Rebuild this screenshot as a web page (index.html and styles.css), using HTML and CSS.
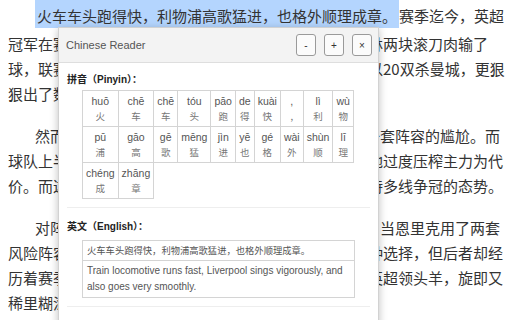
FILE: index.html
```html
<!DOCTYPE html>
<html lang="zh-CN">
<head>
  <meta charset="UTF-8" />
  <meta name="viewport" content="width=device-width, initial-scale=1.0"/>
  <title>Chinese Reader</title>
  <link rel="stylesheet" href="styles.css">
</head>
<body>
  <article class="article">
    <p class="para"><span class="mark">火车车头跑得快，利物浦高歌猛进，也格外顺理成章。</span>赛季迄今，英超冠军在赛季初一度领跑，但先后在对阵热刺与诺丁汉森林两块滚刀肉输了球，联赛积分榜上一度被甩开八分之多。然而他们随后以20双杀曼城，更狠狠出了数月以来积压的一口恶气。</p>
    <p class="para">然而密集的赛程也让利物浦再度陷入只能够依赖同一套阵容的尴尬。而球队上半程的一路领跑，很大程度上是以连续多轮不断地过度压榨主力为代价。而这样的消耗也让他们在新年到来前早早失去了保持多线争冠的态势。</p>
    <p class="para">对阵巴黎圣日耳曼的两回合较量中，局面其实相似：当恩里克用了两套风险阵容应对联赛与欧冠的双线作战，而斯洛特只有一种选择，但后者却经历着赛季最密集的赛程考验，一度还在积分榜上成为了英超领头羊，旋即又稀里糊涂地接连丢分，把榜首拱手让人。</p>
  </article>

  <!-- Reader popup -->
  <div class="reader">
    <div class="reader-head">
      <span class="reader-title">Chinese Reader</span>
      <div class="reader-actions">
        <button class="btn">-</button>
        <button class="btn">+</button>
        <button class="btn">×</button>
      </div>
    </div>
    <div class="reader-body">
      <div class="section">
        <div class="section-title">拼音（Pinyin）：</div>
        <table class="pinyin">
          <tr>
            <td><div class="py">huō</div><div class="hz">火</div></td>
            <td><div class="py">chē</div><div class="hz">车</div></td>
            <td><div class="py">chē</div><div class="hz">车</div></td>
            <td><div class="py">tóu</div><div class="hz">头</div></td>
            <td><div class="py">pāo</div><div class="hz">跑</div></td>
            <td><div class="py">de</div><div class="hz">得</div></td>
            <td><div class="py">kuài</div><div class="hz">快</div></td>
            <td><div class="py">,</div><div class="hz">,</div></td>
            <td><div class="py">lì</div><div class="hz">利</div></td>
            <td><div class="py">wù</div><div class="hz">物</div></td>
          </tr>
          <tr>
            <td><div class="py">pū</div><div class="hz">浦</div></td>
            <td><div class="py">gāo</div><div class="hz">高</div></td>
            <td><div class="py">gē</div><div class="hz">歌</div></td>
            <td><div class="py">mēng</div><div class="hz">猛</div></td>
            <td><div class="py">jìn</div><div class="hz">进</div></td>
            <td><div class="py">yē</div><div class="hz">也</div></td>
            <td><div class="py">gé</div><div class="hz">格</div></td>
            <td><div class="py">wài</div><div class="hz">外</div></td>
            <td><div class="py">shùn</div><div class="hz">顺</div></td>
            <td><div class="py">lī</div><div class="hz">理</div></td>
          </tr>
          <tr>
            <td><div class="py">chéng</div><div class="hz">成</div></td>
            <td><div class="py">zhāng</div><div class="hz">章</div></td>
            <td class="empty"></td><td class="empty"></td><td class="empty"></td>
            <td class="empty"></td><td class="empty"></td><td class="empty"></td>
            <td class="empty"></td><td class="empty"></td>
          </tr>
        </table>
      </div>

      <div class="section">
        <div class="section-title english-title">英文（English）：</div>
        <div class="translation">
          <div class="source">火车车头跑得快，利物浦高歌猛进，也格外顺理成章。</div>
          <div class="target">Train locomotive runs fast, Liverpool sings vigorously, and also goes very smoothly.</div>
        </div>
      </div>
    </div>
  </div>
</body>
</html>
```

FILE: styles.css
```css
* {
  box-sizing: border-box;
}

body {
  margin: 0;
  background-color: #ffffff;
  color: #333;
  font-family: "Noto Sans CJK SC", sans-serif;
}

/* Article */
.article {
  padding: 0 6px 0 8px;
}

.para {
  margin: 0 0 17px;
  font-size: 15px;
  line-height: 25px;
  text-indent: 27px;
}

.mark {
  display: inline-block;
  text-indent: 0;
  padding: 3px 2px 0;
  margin-bottom: 3px;
  background-color: #b4d5fe;
}

/* Reader popup */
.reader {
  position: absolute;
  left: 58px;
  top: 27px;
  width: 321px;
  height: 320px;
  background-color: #fff;
  border: 1px solid #d2d2d2;
  box-shadow: 0 2px 8px rgba(0, 0, 0, 0.25);
  font-family: "Liberation Sans", "Noto Sans CJK SC", sans-serif;
  color: #333;
}

.reader-head {
  height: 35px;
  display: flex;
  justify-content: space-between;
  align-items: center;
  padding: 0 6px 0 7px;
  background-color: #f3f3f3;
  border-bottom: 1px solid #dedede;
}

.reader-title {
  font-size: 11px;
  color: #555;
}

.reader-actions {
  display: flex;
  gap: 8px;
}

.btn {
  width: 20px;
  height: 22px;
  padding: 0;
  border: 1px solid #9a9a9a;
  border-radius: 3px;
  background-color: #fbfbfb;
  font-family: "Liberation Sans", sans-serif;
  font-size: 10px;
  color: #333;
}

.reader-body {
  padding: 0 8px;
}

.section {
  padding: 10px 0 8px;
  border-bottom: 1px solid #eeeeee;
}

.section + .section {
  padding-top: 12px;
}

.section-title {
  font-size: 10px;
  font-weight: bold;
  line-height: 14px;
  margin-bottom: 3px;
  color: #222;
}

.english-title {
  margin-bottom: 6px;
}

/* Pinyin table */
.pinyin {
  margin-left: 15px;
  border-collapse: collapse;
}

.pinyin td {
  border: 1px solid #d4d4d4;
  padding: 3px 3px 2px;
  text-align: center;
  line-height: 15px;
}

.pinyin td.empty {
  border: none;
}

.py {
  font-size: 10.5px;
  color: #555;
}

.hz {
  font-family: "Noto Sans CJK SC", sans-serif;
  font-size: 9.5px;
  color: #777;
}

/* Translation box */
.translation {
  margin-left: 15px;
  width: 273px;
  border: 1px solid #d4d4d4;
  color: #555;
}

.source {
  padding: 2px 4px 3px;
  font-family: "Noto Sans CJK SC", sans-serif;
  font-size: 9.3px;
  line-height: 14px;
  border-bottom: 1px solid #d4d4d4;
}

.target {
  padding: 2px 4px 3px;
  font-size: 10px;
  line-height: 15.5px;
}
```
